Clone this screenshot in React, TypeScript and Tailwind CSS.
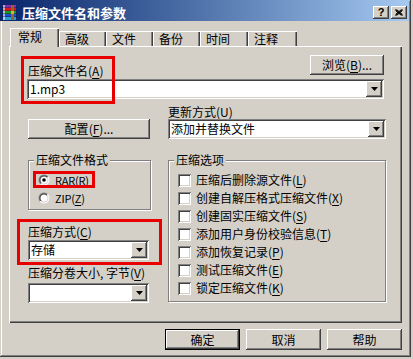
import React from "react";

const raised =
  "bg-[#d4d0c8] shadow-[inset_-1px_-1px_#404040,inset_1px_1px_#fff,inset_-2px_-2px_#808080,inset_2px_2px_#d4d0c8]";
const sunken =
  "bg-white shadow-[inset_1px_1px_#808080,inset_-1px_-1px_#fff,inset_2px_2px_#404040,inset_-2px_-2px_#d4d0c8]";

function M({ t, k, after, className }: { t: string; k: string; after?: string; className?: string }) {
  return (
    <span className={`whitespace-nowrap ${className ?? ""}`}>
      {t}(<span className="underline underline-offset-[2px]">{k}</span>){after}
    </span>
  );
}

function Arrow() {
  return (
    <svg width="7" height="4" viewBox="0 0 7 4">
      <polygon points="0,0 7,0 3.5,4" fill="#000" />
    </svg>
  );
}

function Combo({ value, className }: { value?: string; className: string }) {
  return (
    <div className={`${sunken} h-[20px] flex items-center pl-[3px] pr-[2px] ${className}`}>
      <span className="flex-1 whitespace-nowrap leading-[16px]">{value}</span>
      <div className={`${raised} w-[16px] h-[16px] flex items-center justify-center shrink-0`}>
        <Arrow />
      </div>
    </div>
  );
}

function Btn({ children, className, def }: { children: React.ReactNode; className: string; def?: boolean }) {
  const cls = def
    ? "bg-[#d4d0c8] shadow-[inset_0_0_0_1px_#000,inset_-2px_-2px_#404040,inset_2px_2px_#fff,inset_-3px_-3px_#808080]"
    : raised;
  return <div className={`${cls} flex items-center justify-center ${className}`}>{children}</div>;
}

function Radio({ on }: { on?: boolean }) {
  return (
    <svg width="12" height="12" viewBox="0 0 12 12" className="shrink-0">
      <defs>
        <linearGradient id="ro" x1="0" y1="0" x2="1" y2="1">
          <stop offset="0.5" stopColor="#808080" />
          <stop offset="0.5" stopColor="#ffffff" />
        </linearGradient>
        <linearGradient id="ri" x1="0" y1="0" x2="1" y2="1">
          <stop offset="0.5" stopColor="#404040" />
          <stop offset="0.5" stopColor="#d4d0c8" />
        </linearGradient>
      </defs>
      <circle cx="6" cy="6" r="5.5" fill="url(#ro)" />
      <circle cx="6" cy="6" r="4.5" fill="url(#ri)" />
      <circle cx="6" cy="6" r="3.5" fill="#fff" />
      {on && <circle cx="6" cy="6" r="1.8" fill="#000" />}
    </svg>
  );
}

function Check() {
  return <div className={`${sunken} w-[13px] h-[13px] shrink-0`} />;
}

function RarIcon() {
  return (
    <svg width="16" height="15" viewBox="0 0 16 15">
      <rect x="1" y="0" width="13" height="3" fill="#8a2cb0" />
      <rect x="1" y="3" width="13" height="3" fill="#d41c1c" />
      <rect x="1" y="6" width="13" height="3" fill="#1a9a2a" />
      <rect x="1" y="9" width="13" height="3" fill="#1c4cd8" />
      <rect x="1" y="12" width="13" height="3" fill="#2a9ad0" />
      <rect x="1" y="0" width="2" height="15" fill="#ffffff" opacity="0.55" />
      <rect x="0" y="2" width="15" height="1" fill="#000" opacity="0.3" />
      <rect x="0" y="5" width="15" height="1" fill="#000" opacity="0.3" />
      <rect x="0" y="8" width="15" height="1" fill="#000" opacity="0.3" />
      <rect x="0" y="11" width="15" height="1" fill="#000" opacity="0.3" />
      <rect x="9" y="0" width="3" height="15" fill="#9a6420" />
      <rect x="9" y="6" width="3" height="3" fill="#d8b040" />
    </svg>
  );
}

const tabs = ["高级", "文件", "备份", "时间", "注释"];
const tabW = ["w-[47px]", "w-[47px]", "w-[47px]", "w-[48px]", "w-[49px]"];

const opts: [string, string][] = [
  ["压缩后删除源文件", "L"],
  ["创建自解压格式压缩文件", "X"],
  ["创建固实压缩文件", "S"],
  ["添加用户身份校验信息", "T"],
  ["添加恢复记录", "P"],
  ["测试压缩文件", "E"],
  ["锁定压缩文件", "K"],
];

const fieldset =
  "border border-[#808080] shadow-[1px_1px_0_#fff,inset_1px_1px_0_#fff] min-w-0";

export default function App() {
  return (
    <div className="w-[413px] h-[359px] bg-[#d4d0c8] font-['Noto_Sans_CJK_SC',sans-serif] text-[12px] leading-[14px] text-black relative overflow-hidden">
      <div className="w-[411px] h-[357px] flex flex-col shadow-[inset_-1px_-1px_#404040,inset_1px_1px_#d4d0c8,inset_-2px_-2px_#808080,inset_2px_2px_#fff]">
        {/* title bar */}
        <div className="h-[21px] mr-[2px] flex items-center pt-[4px] pl-[2px] pr-[2px] bg-gradient-to-r from-[#0a246a] to-[#a6caf0]">
          <RarIcon />
          <span className="ml-[4px] text-white font-bold text-[13px] leading-[15px]">压缩文件名和参数</span>
          <div className="flex-1" />
          <div className={`${raised} w-[16px] h-[13px] flex items-center justify-center font-['Liberation_Sans'] font-bold text-[11px] leading-none`}>
            ?
          </div>
          <div className={`${raised} w-[16px] h-[13px] ml-[2px] flex items-center justify-center`}>
            <svg width="8" height="7" viewBox="0 0 8 7">
              <path d="M0.5 0.5 L7.5 6.5 M1.5 0.5 L7.5 5.5 M0.5 1.5 L6.5 6.5 M7.5 0.5 L0.5 6.5 M6.5 0.5 L0.5 5.5 M7.5 1.5 L1.5 6.5" stroke="#000" strokeWidth="1" />
            </svg>
          </div>
        </div>

        <div className="px-[9px] flex flex-col">
          {/* tabs */}
          <div className="flex items-end h-[19px] mt-[6px] pl-[1px]">
            <div className="relative z-10 -mb-px w-[49px] h-[19px] pl-[8px] pb-[2px] flex items-center bg-[#d4d0c8] shadow-[inset_1px_1px_#fff,inset_-1px_0_#404040,inset_-2px_0_#808080]">
              常规
            </div>
            {tabs.map((t, i) => (
              <div
                key={t}
                className={`${tabW[i]} h-[15px] pl-[6px] pt-[1px] flex items-center shadow-[inset_1px_1px_#fff,inset_-1px_0_#404040,inset_-2px_0_#808080]`}
              >
                {t}
              </div>
            ))}
          </div>

          {/* panel */}
          <div className="h-[277px] pt-[9px] pl-[19px] pr-[18px] shadow-[inset_1px_1px_#fff,inset_-1px_-1px_#404040,inset_-2px_-2px_#808080]">
            <div className="flex items-start justify-between">
              <div className="mt-[9px]">
                <M t="压缩文件名" k="A" />
              </div>
              <Btn className="w-[74px] h-[20px]">
                <M t="浏览" k="B" after="..." />
              </Btn>
            </div>
            <Combo value="1.mp3" className="mt-[1px] -ml-px" />

            <div className="grid grid-cols-[122px_218px] gap-x-[18px] mt-[6px]">
              <div className="flex flex-col justify-end">
                <Btn className="h-[20px]">
                  <M t="配置" k="F" after="..." />
                </Btn>
              </div>
              <div className="flex flex-col">
                <div className="h-[14px]">
                  <M t="更新方式" k="U" />
                </div>
                <Combo value="添加并替换文件" className="" />
              </div>
            </div>

            <div className="grid grid-cols-[122px_218px] gap-x-[18px] mt-[14px] items-start">
              <div className="flex flex-col">
                <fieldset className={`${fieldset} w-[123px] pb-[2px]`}>
                  <legend className="ml-[5px] px-[2px] bg-[#d4d0c8] leading-[14px]">压缩文件格式</legend>
                  <div className="pt-[4px] pl-[9px] flex flex-col">
                    <div className="h-[18px] flex items-center gap-[5px]">
                      <Radio on />
                      <M t="RAR" k="R" className="text-[11px] tracking-[-0.2px]" />
                    </div>
                    <div className="h-[18px] flex items-center gap-[5px]">
                      <Radio />
                      <M t="ZIP" k="Z" className="text-[11px] tracking-[-0.2px]" />
                    </div>
                  </div>
                </fieldset>
                <div className="mt-[15px] h-[14px]">
                  <M t="压缩方式" k="C" />
                </div>
                <Combo value="存储" className="mt-[1px] w-[121px]" />
                <div className="mt-[6px] h-[14px]">
                  <M t="压缩分卷大小, 字节" k="V" />
                </div>
                <Combo className="mt-[3px] w-[121px]" />
              </div>
              <fieldset className={`${fieldset} w-[218px] pb-[4px]`}>
                <legend className="ml-[5px] px-[2px] bg-[#d4d0c8] leading-[14px]">压缩选项</legend>
                <div className="pt-[4px] pl-[9px] flex flex-col">
                  {opts.map(([t, k]) => (
                    <div key={k} className="h-[18px] flex items-center gap-[5px]">
                      <Check />
                      <M t={t} k={k} />
                    </div>
                  ))}
                </div>
              </fieldset>
            </div>
          </div>

          {/* bottom buttons */}
          <div className="flex justify-end gap-[6px] mt-[6px]">
            <Btn def className="w-[75px] h-[21px]">确定</Btn>
            <Btn className="w-[75px] h-[21px]">取消</Btn>
            <Btn className="w-[75px] h-[21px]">帮助</Btn>
          </div>
        </div>
      </div>

      {/* red annotation boxes */}
      <div className="absolute left-[21px] top-[56px] w-[94px] h-[48px] border-[3px] border-[#e80000] pointer-events-none" />
      <div className="absolute left-[33px] top-[171px] w-[62px] h-[17px] border-[3px] border-[#e80000] pointer-events-none" />
      <div className="absolute left-[17px] top-[219px] w-[145px] h-[46px] border-[3px] border-[#e80000] pointer-events-none" />
    </div>
  );
}
